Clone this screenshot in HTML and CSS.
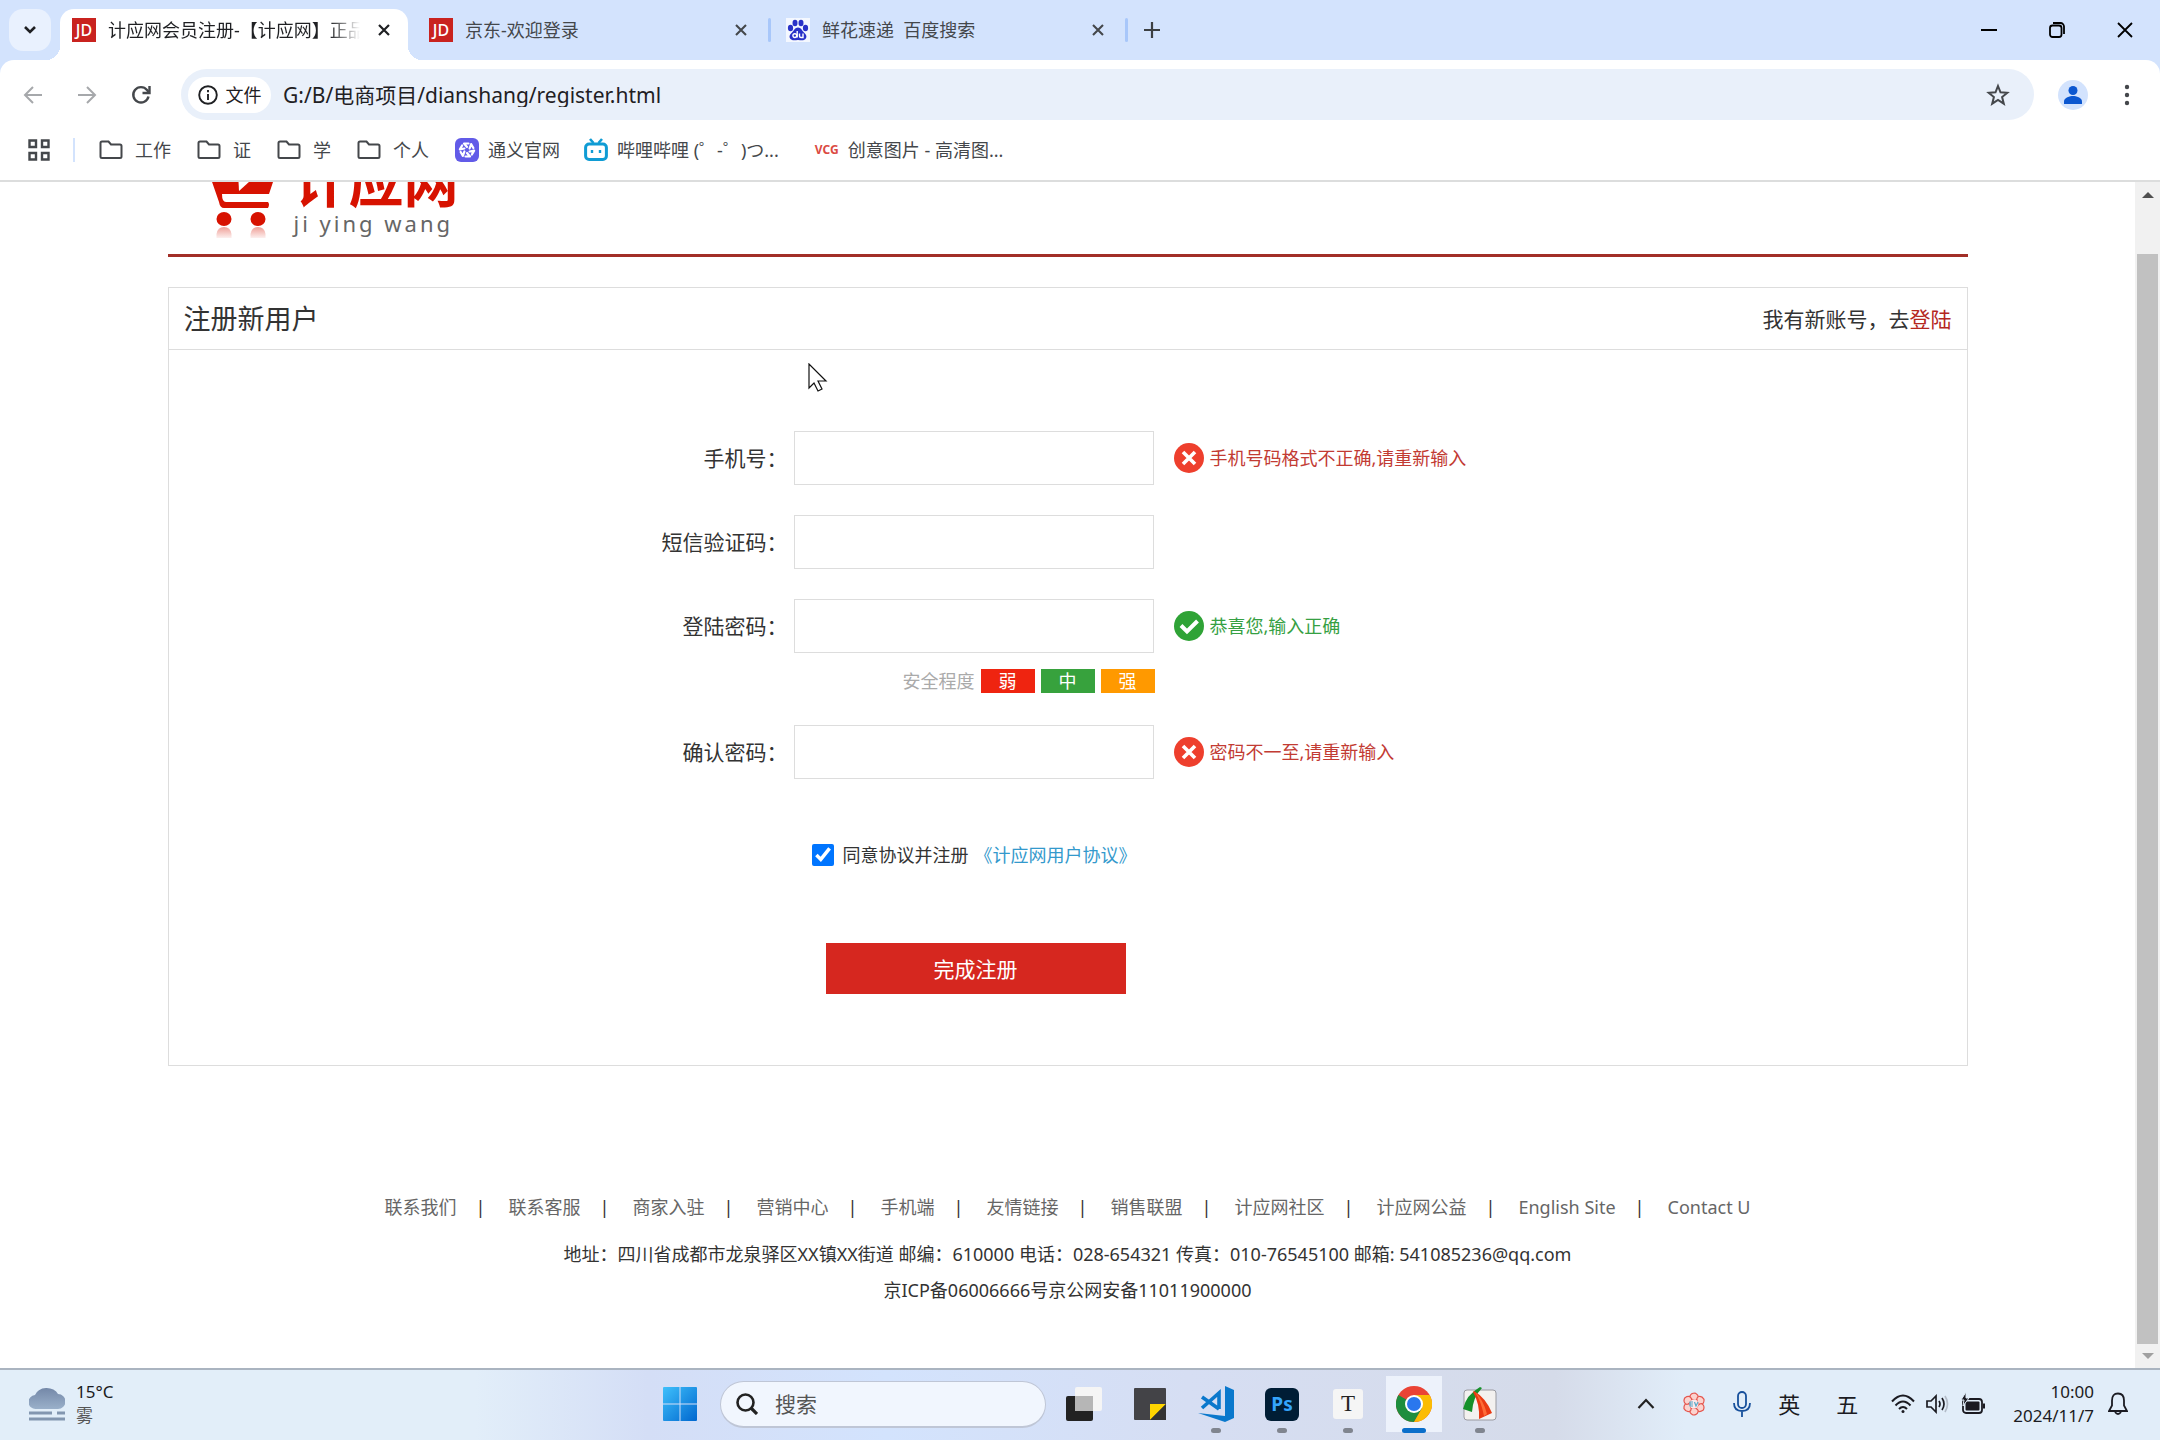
FILE: index.html
```html
<!DOCTYPE html>
<html lang="zh-CN">
<head>
<meta charset="utf-8">
<title>计应网会员注册</title>
<link rel="stylesheet" href="styles.css">
</head>
<body>
<header class="browser">
  <div class="tabstrip">
    <button class="tab-search" aria-label="搜索标签页"><svg width="14" height="10" viewBox="0 0 14 10" fill="none" stroke="#1f2023" stroke-width="2.6"><path d="M2 2l5 5 5-5"/></svg></button>
    <div class="tab tab-active">
      <span class="jd">JD</span><span class="tab-title tab-fade">计应网会员注册-【计应网】正品</span>
      <button class="tab-close" aria-label="关闭"><svg width="12" height="12" viewBox="0 0 12 12" stroke="#1f2023" stroke-width="2.2"><path d="M1 1l10 10M11 1L1 11"/></svg></button>
    </div>
    <div class="tab">
      <span class="jd">JD</span><span class="tab-title">京东-欢迎登录</span>
      <button class="tab-close" aria-label="关闭"><svg width="12" height="12" viewBox="0 0 12 12" stroke="#44474b" stroke-width="2.1"><path d="M1 1l10 10M11 1L1 11"/></svg></button>
    </div>
    <i class="tab-sep"></i>
    <div class="tab">
      <svg class="fav" width="24" height="24" viewBox="0 0 24 24"><rect width="24" height="24" fill="#f4f8ff"/><g fill="#2932c8"><ellipse cx="4.500" cy="10" rx="2.600" ry="3.300"/><ellipse cx="9" cy="5" rx="2.500" ry="3.300"/><ellipse cx="15" cy="5" rx="2.500" ry="3.300"/><ellipse cx="19.500" cy="10" rx="2.600" ry="3.300"/><path d="M12 9.500c3 0 4 3 6 5s3.500 4 1.500 6.500c-2 2-4.500 1-7.500 1s-5.500 1-7.500-1C2.500 18.500 4 16.500 6 14.500s3-5 6-5z"/></g><g fill="none" stroke="#fff" stroke-width="1.400"><circle cx="8.800" cy="17.600" r="1.900"/><path d="M11.200 13v6.500M13.500 15.500v2.500q0 1.500 1.500 1.500h2v-4"/></g></svg>
      <span class="tab-title">鲜花速递&nbsp; 百度搜索</span>
      <button class="tab-close" aria-label="关闭"><svg width="12" height="12" viewBox="0 0 12 12" stroke="#44474b" stroke-width="2.1"><path d="M1 1l10 10M11 1L1 11"/></svg></button>
    </div>
    <i class="tab-sep"></i>
    <button class="tab-new" aria-label="新建标签页"><svg width="16" height="16" viewBox="0 0 16 16" stroke="#3c4043" stroke-width="2.2"><path d="M8 0v16M0 8h16"/></svg></button>
    <div class="window-controls">
      <button aria-label="最小化"><svg width="16" height="16" viewBox="0 0 16 16" stroke="#000" stroke-width="2"><path d="M0 8h16"/></svg></button>
      <button aria-label="还原"><svg width="16" height="16" viewBox="0 0 16 16" fill="none" stroke="#000" stroke-width="1.800"><rect x="1" y="3.500" width="11.500" height="11.500" rx="2.500"/><path d="M4 1h7.500a3.500 3.500 0 0 1 3.500 3.500V12"/></svg></button>
      <button aria-label="关闭窗口"><svg width="16" height="16" viewBox="0 0 16 16" stroke="#000" stroke-width="1.800"><path d="M1 1l14 14M15 1L1 15"/></svg></button>
    </div>
  </div>
  <div class="toolbar">
    <button class="tool" aria-label="后退"><svg width="20" height="20" viewBox="0 0 20 20" fill="none" stroke="#a6a8ab" stroke-width="2"><path d="M19 10H2M10 2l-8 8 8 8"/></svg></button>
    <button class="tool" aria-label="前进"><svg width="20" height="20" viewBox="0 0 20 20" fill="none" stroke="#a6a8ab" stroke-width="2"><path d="M1 10h17M10 2l8 8-8 8"/></svg></button>
    <button class="tool" aria-label="刷新"><svg width="20" height="20" viewBox="0 0 20 20" fill="none" stroke="#44474b" stroke-width="2.400"><path d="M17.500 11.500A7.700 7.700 0 1 1 16 5l2 2.500"/><path d="M18.500 1v7h-7"/></svg></button>
    <div class="omnibox">
      <button class="chip"><svg width="20" height="20" viewBox="0 0 20 20" fill="none" stroke="#1f2023" stroke-width="1.900"><circle cx="10" cy="10" r="8.800"/><path d="M10 9v6M10 5v2.200"/></svg>文件</button>
      <input class="url" aria-label="地址" value="G:/B/电商项目/dianshang/register.html">
      <button class="star" aria-label="收藏"><svg width="24" height="24" viewBox="0 0 24 24" fill="none" stroke="#44474b" stroke-width="2"><path d="M12 3l2.500 6.300 6.800.500-5.200 4.300 1.700 6.600L12 17l-5.800 3.700 1.700-6.600L2.700 9.800l6.800-.500z"/></svg></button>
    </div>
    <button class="tool" aria-label="个人资料"><svg width="30" height="30" viewBox="0 0 30 30"><circle cx="15" cy="15" r="15" fill="#d3e3fd"/><circle cx="15" cy="10.500" r="4.500" fill="#0b57d0"/><path d="M6 24v-2.500c0-4 6-5.500 9-5.500s9 1.500 9 5.500V24z" fill="#0b57d0"/></svg></button>
    <button class="tool" aria-label="菜单"><svg width="6" height="22" viewBox="0 0 6 22" fill="#44474b"><circle cx="3" cy="3" r="2.200"/><circle cx="3" cy="11" r="2.200"/><circle cx="3" cy="19" r="2.200"/></svg></button>
  </div>
  <nav class="bookmarks">
    <button class="apps" aria-label="应用"><svg width="22" height="22" viewBox="0 0 22 22" fill="none" stroke="#44474b" stroke-width="2.400"><path d="M1.500 1.500h6.500v6.500H1.500zM14 1.500h6.500v6.500H14zM1.500 14h6.500v6.500H1.500zM14 14h6.500v6.500H14z"/></svg></button>
    <i class="bm-sep"></i>
    <a class="bm bm-folder" href="#"><svg width="24" height="20" viewBox="0 0 24 20" fill="none" stroke="#44474b" stroke-width="2"><path d="M1.500 3q0-1.500 1.500-1.500h6.500l2.500 3h9q1.500 0 1.500 1.500v10.500q0 1.500-1.500 1.500H3q-1.500 0-1.500-1.500z"/></svg>工作</a>
    <a class="bm bm-folder" href="#"><svg width="24" height="20" viewBox="0 0 24 20" fill="none" stroke="#44474b" stroke-width="2"><path d="M1.500 3q0-1.500 1.500-1.500h6.500l2.500 3h9q1.500 0 1.500 1.500v10.500q0 1.500-1.500 1.500H3q-1.500 0-1.500-1.500z"/></svg>证</a>
    <a class="bm bm-folder" href="#"><svg width="24" height="20" viewBox="0 0 24 20" fill="none" stroke="#44474b" stroke-width="2"><path d="M1.500 3q0-1.500 1.500-1.500h6.500l2.500 3h9q1.500 0 1.500 1.500v10.500q0 1.500-1.500 1.500H3q-1.500 0-1.500-1.500z"/></svg>学</a>
    <a class="bm bm-folder" href="#"><svg width="24" height="20" viewBox="0 0 24 20" fill="none" stroke="#44474b" stroke-width="2"><path d="M1.500 3q0-1.500 1.500-1.500h6.500l2.500 3h9q1.500 0 1.500 1.500v10.500q0 1.500-1.500 1.500H3q-1.500 0-1.500-1.500z"/></svg>个人</a>
    <a class="bm" href="#"><svg width="24" height="24" viewBox="0 0 24 24"><rect width="24" height="24" rx="6" fill="#625be8"/><g stroke="#fff" stroke-width="2.200" stroke-linecap="round" stroke-linejoin="round" fill="none"><path d="M12 9L9 5.500h4.500"/><path d="M12 9L9 5.500h4.500" transform="rotate(60 12 12)"/><path d="M12 9L9 5.500h4.500" transform="rotate(120 12 12)"/><path d="M12 9L9 5.500h4.500" transform="rotate(180 12 12)"/><path d="M12 9L9 5.500h4.500" transform="rotate(240 12 12)"/><path d="M12 9L9 5.500h4.500" transform="rotate(300 12 12)"/></g></svg>通义官网</a>
    <a class="bm bm-bili" href="#"><svg width="24" height="24" viewBox="0 0 24 24" fill="none" stroke="#109cd4"><rect x="1.600" y="6" width="20.800" height="15.500" rx="3.500" stroke-width="3"/><path d="M6 1l3.500 4M18 1l-3.500 4" stroke-width="2.600"/><path d="M8 12v3M16 12v3" stroke-width="2.400"/></svg>哔哩哔哩 (゜-゜)つ...</a>
    <a class="bm" href="#"><b class="vcg">VCG</b>创意图片 - 高清图...</a>
  </nav>
</header>

<div class="viewport">
  <main class="page">
    <div class="container">
      <div class="brand">
        <svg class="cart" width="66" height="76" viewBox="0 0 66 76"><defs><linearGradient id="fade" x1="0" y1="0" x2="0" y2="1"><stop offset="0" stop-color="#e04030" stop-opacity=".5"/><stop offset="1" stop-color="#e04030" stop-opacity=".08"/></linearGradient></defs><path d="M0 14h65l-6 18H12q0 8 4 8h42q2 2 0 6H14q-4 0-5-6z" fill="#d71200"/><path d="M28 10h22L29 29z" fill="#fff"/><ellipse cx="14" cy="57" rx="7.500" ry="7" fill="#d71200"/><ellipse cx="48" cy="57" rx="7.500" ry="7" fill="#d71200"/><path d="M6.500 72q1-7 7.500-7t7.500 7v4h-15zM40.500 72q1-7 7.500-7t7.500 7v4h-15z" fill="url(#fade)"/></svg>
        <div class="brand-text"><strong class="brand-name">计应网</strong><span class="brand-latin">ji ying wang</span></div>
      </div>
      <section class="panel">
        <div class="panel-head"><h1>注册新用户</h1><p>我有新账号，去<a href="#">登陆</a></p></div>
        <form class="form">
          <div class="row">
            <label for="phone">手机号：</label><input class="field" id="phone" type="text">
            <span class="msg msg-error"><svg width="30" height="30" viewBox="0 0 30 30"><circle cx="15" cy="15" r="15" fill="#ee3f2d"/><path d="M9 9l12 12M21 9L9 21" stroke="#fff" stroke-width="3.600"/></svg>手机号码格式不正确,请重新输入</span>
          </div>
          <div class="row">
            <label for="sms">短信验证码：</label><input class="field" id="sms" type="text">
          </div>
          <div class="row">
            <label for="pwd">登陆密码：</label><input class="field" id="pwd" type="password">
            <span class="msg msg-ok"><svg width="30" height="30" viewBox="0 0 30 30"><circle cx="15" cy="15" r="15" fill="#2fa336"/><path d="M7 14.500l6 6L23.500 10" fill="none" stroke="#fff" stroke-width="4"/></svg>恭喜您,输入正确</span>
          </div>
          <div class="strength"><span>安全程度</span><em class="weak">弱</em><em class="medium">中</em><em class="strong">强</em></div>
          <div class="row">
            <label for="pwd2">确认密码：</label><input class="field" id="pwd2" type="password">
            <span class="msg msg-error"><svg width="30" height="30" viewBox="0 0 30 30"><circle cx="15" cy="15" r="15" fill="#ee3f2d"/><path d="M9 9l12 12M21 9L9 21" stroke="#fff" stroke-width="3.600"/></svg>密码不一至,请重新输入</span>
          </div>
          <div class="agree"><input type="checkbox" id="agree" checked><label for="agree">同意协议并注册</label><a href="#">《计应网用户协议》</a></div>
          <button class="submit" type="button">完成注册</button>
        </form>
      </section>
      <footer class="footer">
        <nav class="links"><a href="#">联系我们</a><span>|</span><a href="#">联系客服</a><span>|</span><a href="#">商家入驻</a><span>|</span><a href="#">营销中心</a><span>|</span><a href="#">手机端</a><span>|</span><a href="#">友情链接</a><span>|</span><a href="#">销售联盟</a><span>|</span><a href="#">计应网社区</a><span>|</span><a href="#">计应网公益</a><span>|</span><a href="#">English Site</a><span>|</span><a href="#">Contact U</a></nav>
        <p>地址：四川省成都市龙泉驿区XX镇XX街道 邮编：610000 电话：028-654321 传真：010-76545100 邮箱: 541085236@qq.com</p>
        <p>京ICP备06006666号京公网安备11011900000</p>
      </footer>
    </div>
    <svg class="cursor" width="20" height="29" viewBox="0 0 20 29" fill="#fff" stroke="#111" stroke-width="1.200"><path d="M1 1v24l5-5 4 8 4-2-4-8h8z"/></svg>
  </main>
  <div class="scrollbar"><svg width="12" height="6" viewBox="0 0 12 6" fill="#505050"><path d="M0 6l6-6 6 6z"/></svg><i class="thumb"></i><svg width="12" height="6" viewBox="0 0 12 6" fill="#a0a0a0"><path d="M0 0l6 6 6-6z"/></svg></div>
</div>

<footer class="taskbar">
  <button class="weather">
    <svg width="36" height="36" viewBox="0 0 36 36"><defs><linearGradient id="cloud" x1="0" y1="0" x2="0" y2="1"><stop offset="0" stop-color="#7488a8"/><stop offset="1" stop-color="#9ab0ca"/></linearGradient></defs><path d="M7 23a7 7 0 0 1-1-14 12 9 0 0 1 23-1 7.500 7.500 0 0 1 0 15z" fill="url(#cloud)"/><path d="M0 27h23M28 27h8M0 33h36" stroke="#8296b0" stroke-width="3"/></svg>
    <span>15°C<br><span class="muted">雾</span></span>
  </button>
  <div class="apps-bar">
    <button class="app" aria-label="开始"><svg width="36" height="36" viewBox="0 0 36 36"><defs><linearGradient id="win" x1="0" y1="0" x2="1" y2="1"><stop offset="0" stop-color="#3fc0fb"/><stop offset="1" stop-color="#0067cf"/></linearGradient></defs><path d="M2 1h15.500v16.500H1V2q0-1 1-1zM18.500 1H34q1 0 1 1v15.500H18.500zM1 18.500h16.500V35H2q-1 0-1-1zM18.500 18.500H35V34q0 1-1 1H18.500z" fill="url(#win)"/></svg></button>
    <label class="search"><svg width="22" height="22" viewBox="0 0 22 22" fill="none" stroke="#222" stroke-width="2.600"><circle cx="9.500" cy="9.500" r="8"/><path d="M15 15l6 6" stroke-width="3.200"/></svg><input aria-label="搜索" placeholder="搜索"></label>
    <button class="app" aria-label="任务视图"><svg width="36" height="36" viewBox="0 0 36 36"><rect x="0" y="10" width="27" height="25" rx="2" fill="#222"/><rect x="9" y="1" width="27" height="24" rx="2" fill="#f5f5f5"/><path d="M9 10h18v15H9z" fill="#b6b6b6"/></svg></button>
    <button class="app" aria-label="便笺"><svg width="32" height="32" viewBox="0 0 32 32"><rect width="32" height="32" rx="1" fill="#434347"/><path d="M16 16h16L16 32z" fill="#ffd500"/><path d="M32 16v16H16z" fill="#333"/></svg></button>
    <button class="app app-open" aria-label="Visual Studio Code"><svg width="36" height="36" viewBox="0 0 36 36"><g fill="#0a78cc"><path d="M27 0l9 4v28l-9 4L0 27l27 3z"/></g><path d="M4 11l17 12M4 22L21 7v16" fill="none" stroke="#0a78cc" stroke-width="3.600"/></svg></button>
    <button class="app app-open" aria-label="Photoshop"><span class="ps">Ps</span></button>
    <button class="app app-open" aria-label="Typora"><span class="ty">T</span></button>
    <button class="app app-current" aria-label="Chrome"><svg width="36" height="36" viewBox="0 0 36 36"><circle cx="18" cy="18" r="18" fill="#ea4335"/><path d="M18 18L2.400 9A18 18 0 0 0 18 36l7.800-13.500z" fill="#1e8e3e"/><path d="M18 9h15.600A18 18 0 0 1 18 36l7.800-13.500z" fill="#fbbc04"/><circle cx="18" cy="18" r="9" fill="#fff"/><circle cx="18" cy="18" r="7" fill="#2a77ee"/></svg></button>
    <button class="app app-open" aria-label="FastStone"><svg width="36" height="36" viewBox="0 0 36 36"><rect x="2" y="4" width="32" height="30" rx="3" fill="#f3f1ef" stroke="#9a9aa0"/><path d="M18 1Q4 9 1 23l9 3Q11 11 20 2z" fill="#15902a"/><path d="M11 6q7 12 6 27l13-6Q24 12 12 5z" fill="#e93912"/><path d="M13 6q6 9 9 24l3-2Q21 13 13 6z" fill="#ff6b35"/></svg></button>
  </div>
  <div class="tray">
    <button class="t-icon" aria-label="显示隐藏的图标"><svg width="18" height="12" viewBox="0 0 18 12" fill="none" stroke="#222" stroke-width="2.200"><path d="M1.500 10L9 2l7.500 8"/></svg></button>
    <button class="t-icon" aria-label="EV"><svg width="24" height="24" viewBox="0 0 24 24" fill="#fbd3cf" stroke="#e5564e" stroke-width="1.200"><path d="M12 8q-5-1-4-4t5-3q4 2 3 5t-4 2z"/><path d="M12 8q-5-1-4-4t5-3q4 2 3 5t-4 2z" transform="rotate(60 12 12)"/><path d="M12 8q-5-1-4-4t5-3q4 2 3 5t-4 2z" transform="rotate(120 12 12)"/><path d="M12 8q-5-1-4-4t5-3q4 2 3 5t-4 2z" transform="rotate(180 12 12)"/><path d="M12 8q-5-1-4-4t5-3q4 2 3 5t-4 2z" transform="rotate(240 12 12)"/><path d="M12 8q-5-1-4-4t5-3q4 2 3 5t-4 2z" transform="rotate(300 12 12)"/><circle cx="12" cy="12" r="4.500" fill="#fbe9ea" stroke="none"/><path d="M11 10H8v4h3M8 12h3M12.500 10l1.500 4 2-4" fill="none" stroke="#58a8c8"/></svg></button>
    <button class="t-icon" aria-label="麦克风"><svg width="18" height="26" viewBox="0 0 18 26" fill="none" stroke="#17509c" stroke-width="1.800"><rect x="5" y="1" width="8" height="16" rx="4"/><path d="M1 12q0 8 8 8t8-8M9 20v6"/></svg></button>
    <button class="ime">英</button>
    <button class="ime">五</button>
    <button class="status" aria-label="网络和音量">
      <svg width="24" height="20" viewBox="0 0 24 20" fill="none" stroke="#1b1b22" stroke-width="2"><path d="M1 7.500q11-12 22 0M4.500 11.500q7.500-8 15 0M8 15q4-4 8 0"/><circle cx="12" cy="17.500" r="1.500" fill="#1b1b22" stroke="none"/></svg>
      <svg width="24" height="20" viewBox="0 0 24 20" fill="none" stroke="#1b1b22" stroke-width="1.700"><path d="M1 7h4l5-5v16l-5-5H1zM13 7q2 3 0 6M16 4q4 6 0 12"/><path d="M19 2q5 8 0 16" stroke="#b4bcc8"/></svg>
      <svg width="24" height="24" viewBox="0 0 24 24"><rect x="2" y="7" width="19" height="14" rx="3" fill="none" stroke="#1b1b22" stroke-width="1.800"/><rect x="4.500" y="9.500" width="14" height="9" rx="1" fill="#1b1b22"/><path d="M22 11.500h2v5h-2z" fill="#1b1b22"/><path d="M5 0L0 8h3l-1 6 6-8H5z" fill="#1b1b22" stroke="#e1edf9"/></svg>
    </button>
    <button class="clock">10:00<br>2024/11/7</button>
    <button class="bell" aria-label="通知"><svg width="20" height="24" viewBox="0 0 20 24" fill="none" stroke="#1b1b22" stroke-width="1.800"><path d="M10 1.500q6 0 6 7v5l3 5.500H1l3-5.500v-5q0-7 6-7zM7 20q3 4 6 0"/></svg></button>
  </div>
</footer>
</body>
</html>
```
FILE: styles.css
```css
* { box-sizing: border-box; margin: 0; padding: 0; }
body {
  height: 100vh;
  display: flex;
  flex-direction: column;
  overflow: hidden;
  font: 18px/24px "Noto Sans", "Noto Sans CJK SC", sans-serif;
  color: #333;
  background: #fff;
}
button { border: 0; background: none; font: inherit; color: inherit; display: flex; align-items: center; justify-content: center; }
input { font: inherit; color: inherit; outline: 0; }
a { color: inherit; text-decoration: none; }
svg { display: block; flex: none; }

/* browser window */
.browser { background: #d3e3fd; border-bottom: 2px solid #dcdddd; flex: none; }
.tabstrip { display: flex; height: 60px; padding: 9px 0 0 9px; }
.tab-search { width: 42px; height: 42px; border-radius: 14px; background: #e9f1fe; margin-right: 9px; }
.tab { display: flex; align-items: center; gap: 12px; width: 348px; height: 42px; padding: 0 12px; color: #44474b; }
.tab-active { position: relative; height: 51px; padding-bottom: 9px; margin-right: 9px; background: #fff; border-radius: 14px 14px 0 0; color: #1f2023; }
.tab-active::before, .tab-active::after { content: ""; position: absolute; bottom: 0; width: 14px; height: 14px; }
.tab-active::before { right: 100%; background: radial-gradient(circle at 0 0, transparent 14px, #fff 14px); }
.tab-active::after { left: 100%; background: radial-gradient(circle at 100% 0, transparent 14px, #fff 14px); }
.jd { flex: none; width: 24px; height: 24px; background: #c9231f; color: #fff; font-size: 16px; font-weight: 500; text-align: center; }
.tab-title { flex: 1; min-width: 0; overflow: hidden; white-space: nowrap; }
.tab-fade { -webkit-mask-image: linear-gradient(90deg, #000 88%, transparent); mask-image: linear-gradient(90deg, #000 88%, transparent); }
.tab-close { flex: none; width: 24px; height: 24px; }
.tab-sep { width: 3px; height: 24px; margin: 9px 3px 0; background: #a8c7fa; border-radius: 2px; }
.tab-new { width: 42px; height: 42px; }
.window-controls { display: flex; margin-left: auto; height: 42px; padding-right: 1px; }
.window-controls button { width: 68px; }
.toolbar { display: flex; align-items: center; height: 60px; padding: 9px 6px 0; background: #fff; border-radius: 14px 14px 0 0; }
.tool { width: 54px; height: 51px; flex: none; }
.omnibox { flex: 1; display: flex; align-items: center; height: 51px; margin: 0 12px 0 13px; padding: 0 24px 0 7px; background: #e9f0fa; border-radius: 26px; }
.chip { height: 36px; width: 83px; gap: 8px; border-radius: 18px; background: #fff; color: #1f2023; }
.url { flex: 1; min-width: 0; margin-left: 12px; border: 0; background: none; font-size: 21px; color: #1f2023; }
.bookmarks { display: flex; align-items: center; height: 60px; padding-left: 28px; background: #fff; color: #44474b; }
.bm-sep { width: 2px; height: 24px; margin: 0 24px 0 23px; background: #d3e3fd; }
.bm { display: flex; align-items: center; gap: 9px; margin-right: 24px; white-space: nowrap; }
.bm-folder { gap: 12px; margin-right: 26px; }
.bm-bili { margin-right: 36px; }
.vcg { width: 24px; color: #db4a42; font: bold 12px/24px "Noto Sans", sans-serif; }

/* page */
.viewport { flex: 1; min-height: 0; display: flex; }
.page { position: relative; flex: 1; min-width: 0; overflow: hidden; }
.container { max-width: 1800px; margin: 0 auto; }
.brand { display: flex; align-items: flex-end; gap: 18px; height: 75px; padding: 0 42px 16px; border-bottom: 3px solid #a22f28; }
.brand-text { display: flex; flex-direction: column; }
.brand-name { font-size: 55px; line-height: 54px; color: #d71200; }
.brand-latin { font-size: 22px; line-height: 30px; letter-spacing: 3px; color: #666; }
.panel { margin-top: 30px; border: 1px solid #ddd; }
.panel-head { display: flex; align-items: center; justify-content: space-between; height: 62px; padding: 0 15px; border-bottom: 1px solid #ddd; font-size: 21px; }
.panel-head h1 { font-size: 27px; line-height: 36px; font-weight: 400; }
.panel-head a { color: #b4271e; }
.form { padding: 81px 0 71px; }
.row { display: flex; align-items: center; height: 54px; margin-bottom: 30px; }
.row label { width: 619px; text-align: right; font-size: 21px; margin-right: 6px; }
.field { width: 360px; height: 54px; padding: 0 12px; border: 1px solid #ddd; background: #fff; }
.msg { display: flex; align-items: center; gap: 6px; margin-left: 20px; }
.msg-error { color: #c23b33; }
.msg-ok { color: #36a043; }
.strength { display: flex; align-items: center; justify-content: flex-end; gap: 6px; width: 986px; margin: -14px 0 32px; color: #aaa; }
.strength em { width: 54px; font-style: normal; text-align: center; color: #fff; }
.weak { background: #ef2410; }
.medium { background: #37a23d; }
.strong { background: #ff9900; }
.agree { display: flex; align-items: center; margin: 64px 0 0 643px; }
.agree input { width: 22px; height: 22px; margin-right: 9px; accent-color: #0075ff; }
.agree a { margin-left: 6px; color: #3399cc; }
.submit { width: 300px; height: 51px; margin: 76px 0 0 657px; background: #d6271f; color: #fff; font-size: 21px; }
.footer { margin-top: 129px; text-align: center; }
.links { display: flex; justify-content: center; color: #666; }
.links span { width: 52px; padding-right: 4px; color: #333; }
.footer p { line-height: 36px; }
.links + p { margin-top: 17px; }
.cursor { position: absolute; left: 808px; top: 181px; }
.scrollbar { width: 25px; display: flex; flex-direction: column; align-items: center; padding: 10px 0 9px; background: #f1f1f1; }
.thumb { flex: 1; width: 21px; margin: 56px 0 9px; background: #c1c1c1; }

/* taskbar */
.taskbar { flex: none; display: grid; grid-template-columns: 1fr auto 1fr; height: 72px; padding-bottom: 2px; border-top: 2px solid #aab4c0; color: #1b1b22; background: linear-gradient(90deg, #e2eef9 0 22%, #d4def6 30%, #d3e3fd 41%, #d6def3 55%, #d5dbe9 72%, #e1edf9 78%); }
.weather { justify-self: start; margin-left: 29px; gap: 11px; font-size: 17px; text-align: left; }
.muted { color: #555; }
.apps-bar { display: flex; align-items: center; }
.app { position: relative; width: 66px; height: 68px; }
.app-open::after, .app-current::after { content: ""; position: absolute; left: 28px; bottom: 5px; width: 10px; height: 5px; border-radius: 3px; background: #80858f; }
.app-current::after { left: 21px; width: 24px; background: #0b6fca; }
.app-current { background: linear-gradient(#edf2fb, #edf2fb) center / 56px 56px no-repeat; }
.search { display: flex; align-items: center; gap: 17px; width: 326px; height: 47px; margin: 0 5px 0 7px; padding: 0 15px; border: 1px solid #bfc6d6; border-bottom-width: 2px; border-radius: 24px; background: #f1f6fe; }
.search input { flex: 1; min-width: 0; border: 0; background: none; font-size: 21px; }
.search input::placeholder { color: #555; opacity: 1; }
.ps { width: 34px; height: 33px; border-radius: 6px; background: #001d35; color: #35a4fb; font: bold 19px/32px "Noto Sans", sans-serif; }
.ty { width: 30px; height: 30px; border-radius: 3px; background: #f5f5f5; color: #222; font: 23px/30px "Liberation Serif", serif; }
.tray { display: flex; align-items: center; justify-content: flex-end; padding-right: 30px; }
.t-icon { width: 48px; height: 48px; }
.ime { width: 46px; margin-right: 12px; font-size: 22px; }
.status { gap: 11px; margin-left: 9px; }
.clock { margin-left: 28px; font-size: 17px; text-align: right; }
.bell { width: 24px; margin-left: 12px; }
```
